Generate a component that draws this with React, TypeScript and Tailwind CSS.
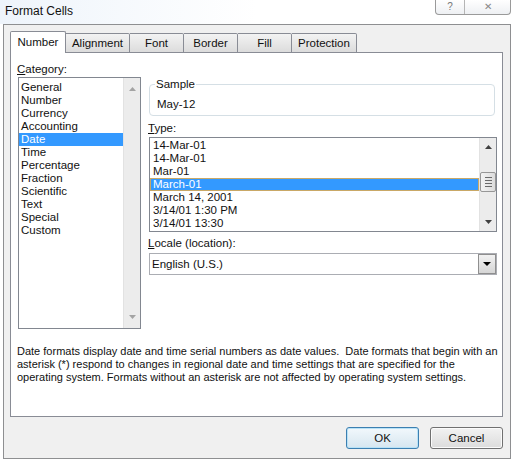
import React from "react";

const categories = [
  "General",
  "Number",
  "Currency",
  "Accounting",
  "Date",
  "Time",
  "Percentage",
  "Fraction",
  "Scientific",
  "Text",
  "Special",
  "Custom",
];

const types = [
  "14-Mar-01",
  "14-Mar-01",
  "Mar-01",
  "March-01",
  "March 14, 2001",
  "3/14/01 1:30 PM",
  "3/14/01 13:30",
];

const tabs = [
  { label: "Number", w: "w-[56px]" },
  { label: "Alignment", w: "w-[64px]" },
  { label: "Font", w: "w-[54px]" },
  { label: "Border", w: "w-[54px]" },
  { label: "Fill", w: "w-[54px]" },
  { label: "Protection", w: "w-[65px]" },
];

function Arrow({ down, dark }: { down?: boolean; dark?: boolean }) {
  return (
    <svg width="7" height="4" viewBox="0 0 7 4" className={dark ? "text-[#404040]" : "text-[#a3a3a3]"}>
      <path d={down ? "M0 0h7L3.5 4z" : "M0 4h7L3.5 0z"} fill="currentColor" />
    </svg>
  );
}

export default function App() {
  return (
    <div className="w-[514px] h-[461px] bg-white text-[#111] text-[11.5px] leading-[13px] font-['Liberation_Sans','Arial',sans-serif] overflow-hidden">
      {/* Title bar */}
      <div className="h-[24px] flex items-start bg-gradient-to-r from-[#eef4fb] via-white to-white">
        <div className="pl-[5px] pt-[4px] leading-[14px] text-[12px]">Format Cells</div>
        <div className="ml-auto mr-[3px] flex h-[15px] border border-t-0 border-[#9a9a9a] rounded-b-[4px] bg-gradient-to-b from-white to-[#eef0f3]">
          <div className="w-[29px] flex items-center justify-center border-r border-[#b5b5b5] text-[10px] leading-[10px] text-[#777]">?</div>
          <div className="w-[45px] flex items-center justify-center text-[10px] leading-[10px] text-[#888]">✕</div>
        </div>
      </div>

      {/* Client frame */}
      <div className="mx-[3px] h-[435px] border border-[#8e8f91] bg-[#f0f0f0] pl-[6px]">
        {/* Tabs */}
        <div className="mt-[6px] h-[22px] flex items-end -mb-px relative z-10">
          {tabs.map((t, i) =>
            i === 0 ? (
              <div
                key={t.label}
                className={`${t.w} h-[22px] bg-white border border-b-0 border-[#898c95] flex items-center justify-center pb-[1px] rounded-t-[2px]`}
              >
                {t.label}
              </div>
            ) : (
              <div
                key={t.label}
                className={`${t.w} h-[20px] border border-l-0 border-[#898c95] bg-gradient-to-b from-[#f3f3f3] to-[#dcdcdc] flex items-center justify-center rounded-tr-[2px]`}
              >
                {t.label}
              </div>
            )
          )}
        </div>

        {/* Panel */}
        <div className="w-[493px] h-[365px] border border-[#898c95] bg-white">
          <div className="flex">
            <div className="flex flex-col">
              <div className="ml-[6px] mt-[9px] h-[15px] leading-[15px]">
                <span className="underline">C</span>ategory:
              </div>
              <div className="ml-[7px] w-[123px] h-[252px] border border-[#828790] flex">
                <div className="flex-1 pt-[3px]">
                  {categories.map((c) => (
                    <div
                      key={c}
                      className={`h-[13px] leading-[13px] pl-[2px] ${c === "Date" ? "bg-[#3399ff] text-white" : ""}`}
                    >
                      {c}
                    </div>
                  ))}
                </div>
                <div className="w-[17px] bg-[#ececec] border-l border-[#e2e2e2] flex flex-col items-center justify-between py-[9px]">
                  <Arrow />
                  <Arrow down />
                </div>
              </div>
            </div>

            <div className="ml-[8px] mt-[31px] w-[348px] flex flex-col">
              {/* Sample group */}
              <div className="relative w-[346px] h-[32px] border border-[#d5dfe5] rounded-[4px] pl-[7px] pt-[13px] leading-[13px]">
                <span className="absolute left-[5px] -top-[8px] bg-white px-[1px] leading-[14px]">Sample</span>
                May-12
              </div>

              <div className="mt-[5px] h-[15px] leading-[15px] -ml-px">
                <span className="underline">T</span>ype:
              </div>
              <div className="mt-[1px] h-[95px] border border-[#828790] flex">
                <div className="flex-1 pt-[1px]">
                  {types.map((t, i) => (
                    <div
                      key={i}
                      className={`h-[13px] leading-[11px] pl-[2px] ${
                        i === 3 ? "bg-[#3399ff] text-white border border-[#c9a866]" : "border border-transparent"
                      }`}
                    >
                      {t}
                    </div>
                  ))}
                </div>
                <div className="w-[17px] bg-[#ececec] border-l border-[#e2e2e2] flex flex-col items-center py-[7px]">
                  <Arrow dark />
                  <div className="mt-[23px] w-[16px] h-[20px] border border-[#979797] rounded-[2px] bg-gradient-to-r from-[#f4f4f4] to-[#dcdcdc] flex flex-col items-center justify-center gap-[2px]">
                    <div className="w-[7px] h-px bg-[#6b6b6b]" />
                    <div className="w-[7px] h-px bg-[#6b6b6b]" />
                    <div className="w-[7px] h-px bg-[#6b6b6b]" />
                    <div className="w-[7px] h-px bg-[#6b6b6b]" />
                  </div>
                  <div className="mt-auto">
                    <Arrow down dark />
                  </div>
                </div>
              </div>

              <div className="mt-[4px] h-[15px] leading-[15px] -ml-px">
                <span className="underline">L</span>ocale (location):
              </div>
              <div className="mt-[2px] h-[22px] border border-[#abadb3] flex items-center">
                <div className="flex-1 pl-[2px] leading-[14px]">English (U.S.)</div>
                <div className="w-[18px] h-[20px] border border-[#8f8f8f] bg-gradient-to-b from-[#f2f2f2] to-[#d6d6d6] flex items-center justify-center">
                  <svg width="8" height="4" viewBox="0 0 8 4">
                    <path d="M0 0h8L4 4z" fill="#000" />
                  </svg>
                </div>
              </div>
            </div>
          </div>

          <p className="ml-[6px] mt-[16px] leading-[13px] whitespace-pre text-[11px]">
            {"Date formats display date and time serial numbers as date values.  Date formats that begin with an"}
            <br />
            {"asterisk (*) respond to changes in regional date and time settings that are specified for the"}
            <br />
            {"operating system. Formats without an asterisk are not affected by operating system settings."}
          </p>
        </div>

        {/* Buttons */}
        <div className="w-[493px] mt-[10px] flex justify-end gap-[11px]">
          <button className="w-[73px] h-[22px] rounded-[3px] border border-[#3c7fb1] bg-gradient-to-b from-[#f2f8fc] to-[#d6e6f0] shadow-[inset_0_0_0_1px_#b8e2f7]">
            OK
          </button>
          <button className="w-[73px] h-[22px] rounded-[3px] border border-[#707070] bg-gradient-to-b from-[#f2f2f2] to-[#dcdcdc] shadow-[inset_0_0_0_1px_#fbfbfb]">
            Cancel
          </button>
        </div>
      </div>
    </div>
  );
}
